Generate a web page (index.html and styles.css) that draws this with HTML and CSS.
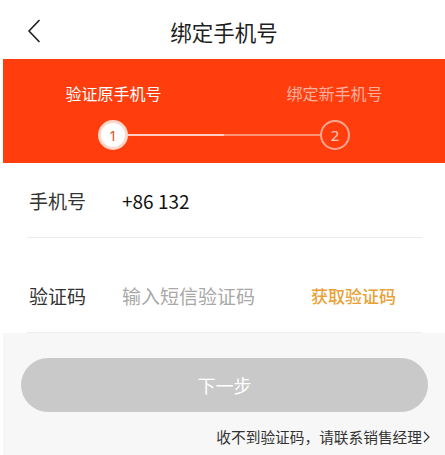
FILE: index.html
```html
<!DOCTYPE html>
<html lang="zh-CN">
<head>
<meta charset="utf-8">
<title>绑定手机号</title>
<link rel="stylesheet" href="styles.css">
</head>
<body>
<div class="page">
  <header class="topbar">
    <div class="back">
      <svg width="14" height="24" viewBox="0 0 14 24"><polyline points="12,1.5 2,12 12,22.5" fill="none" stroke="#222" stroke-width="1.7" stroke-linejoin="round" stroke-linecap="round"/></svg>
    </div>
    <h1 class="title">绑定手机号</h1>
    <div class="spacer"></div>
  </header>

  <section class="steps">
    <div class="labels">
      <span class="label active">验证原手机号</span>
      <span class="label">绑定新手机号</span>
    </div>
    <div class="track">
      <span class="dot dot-active">1</span>
      <span class="line"></span>
      <span class="dot dot-next">2</span>
    </div>
  </section>

  <section class="form">
    <div class="row">
      <span class="field-label">手机号</span>
      <span class="field-value">+86 132</span>
    </div>
    <div class="row row-code">
      <span class="field-label">验证码</span>
      <span class="field-placeholder">输入短信验证码</span>
      <span class="get-code">获取验证码</span>
    </div>
  </section>

  <section class="bottom">
    <button class="next">下一步</button>
    <div class="help">收不到验证码，请联系销售经理<svg class="chev" width="7" height="12" viewBox="0 0 7 12"><polyline points="1,1 6,6 1,11" fill="none" stroke="#333" stroke-width="1.2"/></svg></div>
  </section>
</div>
</body>
</html>
```

FILE: styles.css
```css
* { box-sizing: border-box; }
html, body {
  margin: 0;
  padding: 0;
  background: #fff;
}
body {
  font-family: "Noto Sans CJK SC", "Noto Sans", sans-serif;
  color: #222;
}
.page {
  width: 445px;
  height: 455px;
  padding-left: 3px;
  display: flex;
  flex-direction: column;
  overflow: hidden;
}
.topbar {
  height: 59px;
  display: grid;
  grid-template-columns: 1fr auto 1fr;
  align-items: center;
}
.back {
  padding-left: 24px;
  padding-top: 2px;
  display: flex;
  align-items: center;
}
.title {
  margin: 0;
  font-size: 21.5px;
  font-weight: 400;
  line-height: 28px;
  color: #1e1e1e;
  padding-top: 4px;
}
.steps {
  background: #ff3d0d;
  height: 104px;
  padding-top: 23px;
}
.labels {
  display: grid;
  grid-template-columns: 1fr 1fr;
  text-align: center;
}
.label {
  font-size: 16px;
  line-height: 22px;
  color: rgba(255, 255, 255, 0.6);
}
.label.active {
  color: #fff;
}
.track {
  display: flex;
  align-items: center;
  padding: 0 95px;
  margin-top: 16px;
}
.dot {
  width: 30px;
  height: 30px;
  border-radius: 50%;
  display: flex;
  align-items: center;
  justify-content: center;
  font-size: 15px;
  font-family: "Noto Sans", sans-serif;
  flex: none;
}
.dot-active {
  background: #fff;
  color: #e0562f;
  border: 3px solid rgba(255, 214, 200, 1);
}
.dot-next {
  border: 2px solid rgba(255, 255, 255, 0.55);
  color: rgba(255, 255, 255, 0.75);
}
.line {
  flex: 1;
  height: 2px;
  background: linear-gradient(to right, rgba(255,255,255,0.75) 0%, rgba(255,255,255,0.75) 50%, rgba(255,255,255,0.45) 50%, rgba(255,255,255,0.45) 100%);
}
.form {
  background: #fff;
}
.row {
  height: 75px;
  margin: 0 23px 0 24px;
  border-bottom: 1px solid #ececec;
  display: flex;
  align-items: center;
  font-size: 19px;
  padding-left: 2px;
}
.row-code {
  margin-top: 21px;
  height: 74px;
}
.field-label {
  width: 93px;
  color: #333;
  flex: none;
}
.field-value {
  color: #111;
}
.field-placeholder {
  color: #a8a8a8;
}
.get-code {
  margin-left: auto;
  margin-right: 26px;
  font-size: 17px;
  font-weight: 500;
  color: #e9a136;
}
.bottom {
  flex: 1;
  background: #f7f7f7;
  padding: 25px 17px 0 18px;
  display: flex;
  flex-direction: column;
}
.next {
  height: 54px;
  border: none;
  border-radius: 27px;
  background: #c9c9c9;
  color: #fff;
  font-family: inherit;
  font-size: 18px;
}
.help {
  margin-top: 15px;
  align-self: flex-end;
  font-size: 14.7px;
  line-height: 20px;
  color: #333;
  display: flex;
  align-items: center;
  margin-right: -2px;
}
.chev {
  margin-left: 1px;
}
```
